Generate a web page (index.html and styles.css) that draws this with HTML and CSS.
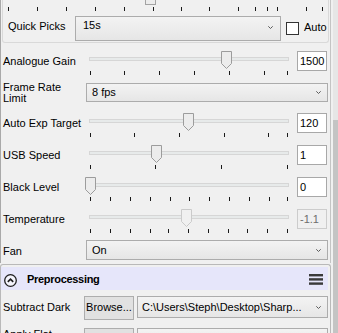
FILE: index.html
```html
<!DOCTYPE html>
<html>
<head>
<meta charset="utf-8">
<link rel="stylesheet" href="styles.css">
</head>
<body>
<div class="screen">
  <div class="main">
    <div class="panel cam">
      <div class="group">
        <div class="topslider">
          <div class="thumb-top"></div>
          <i class="tick" style="left:5px"></i><i class="tick" style="left:34px"></i><i class="tick" style="left:63px"></i><i class="tick" style="left:92px"></i><i class="tick" style="left:121px"></i><i class="tick" style="left:150px"></i><i class="tick" style="left:178px"></i><i class="tick" style="left:206px"></i><i class="tick" style="left:235px"></i><i class="tick" style="left:252px"></i><i class="tick" style="left:264px"></i><i class="tick" style="left:274px"></i><i class="tick" style="left:303px"></i><i class="tick" style="left:319px"></i>
        </div>
        <div class="qp-row">
          <span class="qp-label">Quick Picks</span>
          <div class="combo combo-top qp-combo"><span>15s</span><svg class="chev" width="5" height="3" viewBox="0 0 5 3"><path d="M0.3 0.3L2.5 2.5L4.7 0.3"/></svg></div>
          <span class="check"></span>
          <span class="auto">Auto</span>
        </div>
      </div>

      <div class="row first">
        <span class="lbl">Analogue Gain</span>
        <div class="slider">
          <div class="track"></div>
          <i class="tick" style="left:4px"></i><i class="tick" style="left:38px"></i><i class="tick" style="left:73px"></i><i class="tick" style="left:108px"></i><i class="tick" style="left:143px"></i><i class="tick" style="left:178px"></i><i class="tick" style="left:201px"></i>
          <svg class="thumb" style="left:135px" width="11" height="18" viewBox="0 0 11 18"><path d="M0.5 0.5H10.5V12.5L5.5 17.5L0.5 12.5Z"/></svg>
        </div>
        <span class="val">1500</span>
      </div>

      <div class="row row-frame">
        <span class="lbl lbl-two">Frame Rate<br>Limit</span>
        <div class="combo wide frame-combo"><span>8 fps</span><svg class="chev" width="5" height="3" viewBox="0 0 5 3"><path d="M0.3 0.3L2.5 2.5L4.7 0.3"/></svg></div>
      </div>

      <div class="row">
        <span class="lbl">Auto Exp Target</span>
        <div class="slider">
          <div class="track"></div>
          <i class="tick" style="left:4px"></i><i class="tick" style="left:48px"></i><i class="tick" style="left:93px"></i><i class="tick" style="left:138px"></i><i class="tick" style="left:182px"></i><i class="tick" style="left:201px"></i>
          <svg class="thumb" style="left:97px" width="11" height="18" viewBox="0 0 11 18"><path d="M0.5 0.5H10.5V12.5L5.5 17.5L0.5 12.5Z"/></svg>
        </div>
        <span class="val">120</span>
      </div>

      <div class="row">
        <span class="lbl">USB Speed</span>
        <div class="slider">
          <div class="track"></div>
          <i class="tick" style="left:4px"></i><i class="tick" style="left:69px"></i><i class="tick" style="left:135px"></i><i class="tick" style="left:201px"></i>
          <svg class="thumb" style="left:65px" width="11" height="18" viewBox="0 0 11 18"><path d="M0.5 0.5H10.5V12.5L5.5 17.5L0.5 12.5Z"/></svg>
        </div>
        <span class="val">1</span>
      </div>

      <div class="row">
        <span class="lbl">Black Level</span>
        <div class="slider">
          <div class="track"></div>
          <i class="tick" style="left:4px"></i><i class="tick" style="left:24px"></i><i class="tick" style="left:44px"></i><i class="tick" style="left:64px"></i><i class="tick" style="left:84px"></i><i class="tick" style="left:103px"></i><i class="tick" style="left:123px"></i><i class="tick" style="left:143px"></i><i class="tick" style="left:163px"></i><i class="tick" style="left:183px"></i><i class="tick" style="left:201px"></i>
          <svg class="thumb" style="left:-1px" width="11" height="18" viewBox="0 0 11 18"><path d="M0.5 0.5H10.5V12.5L5.5 17.5L0.5 12.5Z"/></svg>
        </div>
        <span class="val">0</span>
      </div>

      <div class="row row-temp">
        <span class="lbl">Temperature</span>
        <div class="slider">
          <div class="track"></div>
          <i class="tick" style="left:4px"></i><i class="tick" style="left:24px"></i><i class="tick" style="left:44px"></i><i class="tick" style="left:64px"></i><i class="tick" style="left:82px"></i><i class="tick" style="left:102px"></i><i class="tick" style="left:122px"></i><i class="tick" style="left:142px"></i><i class="tick" style="left:161px"></i><i class="tick" style="left:181px"></i><i class="tick" style="left:201px"></i>
          <svg class="thumb thumb-dis" style="left:95px" width="11" height="18" viewBox="0 0 11 18"><path d="M0.5 0.5H10.5V12.5L5.5 17.5L0.5 12.5Z"/></svg>
        </div>
        <span class="val val-dis">-1.1</span>
      </div>

      <div class="row row-fan">
        <span class="lbl">Fan</span>
        <div class="combo wide fan-combo"><span>On</span><svg class="chev" width="5" height="3" viewBox="0 0 5 3"><path d="M0.3 0.3L2.5 2.5L4.7 0.3"/></svg></div>
      </div>
    </div>

    <div class="panel pre">
      <div class="pre-head">
        <svg class="collapse" width="13" height="13" viewBox="0 0 13 13"><circle cx="6.5" cy="6.5" r="5.8"/><path d="M3.8 7.8L6.5 5.1L9.2 7.8"/></svg>
        <span class="pre-title">Preprocessing</span>
        <svg class="menu" width="14" height="11" viewBox="0 0 14 11"><rect x="0" y="0" width="14" height="2.4"/><rect x="0" y="4.2" width="14" height="2.4"/><rect x="0" y="8.4" width="14" height="2.4"/></svg>
      </div>
      <div class="frow">
        <span class="flbl">Subtract Dark</span>
        <span class="btn">Browse...</span>
        <div class="combo path-combo"><span>C:\Users\Steph\Desktop\Sharp...</span><svg class="chev" width="5" height="3" viewBox="0 0 5 3"><path d="M0.3 0.3L2.5 2.5L4.7 0.3"/></svg></div>
      </div>
      <div class="frow">
        <span class="flbl flbl-top">Apply Flat</span>
        <span class="btn">Browse...</span>
        <div class="combo path-combo"><span>None</span><svg class="chev" width="5" height="3" viewBox="0 0 5 3"><path d="M0.3 0.3L2.5 2.5L4.7 0.3"/></svg></div>
      </div>
    </div>
  </div>
  <div class="scrollbar"><div class="sthumb"></div></div>
</div>
</body>
</html>
```

FILE: styles.css
```css
* { box-sizing: border-box; margin: 0; padding: 0; }
html, body { width: 338px; height: 333px; overflow: hidden; background: #f0f0f0; }
body {
  font-family: "Liberation Sans", Arial, sans-serif;
  font-size: 11px;
  line-height: 13px;
  color: #000;
}
.screen { display: flex; height: 333px; }
.main { width: 331px; display: flex; flex-direction: column; }
.scrollbar { width: 5px; margin-left: 2px; background: #e6e6e6; padding-top: 120px; }
.sthumb { height: 260px; background: #c4c4c4; }

.cam {
  height: 263px;
  border-left: 1px solid #a9a9a9;
  border-right: 1px solid #c4c4c4;
}

.group {
  margin-left: 1px;
  width: 327px;
  height: 43px;
  border: 1px solid #d9d9d9;
  border-top: none;
  border-radius: 0 0 3px 3px;
}
.topslider { position: relative; height: 12px; }
.tick { position: absolute; width: 1px; height: 4px; background: #1a1a1a; }
.topslider .tick { top: 7px; }
.thumb-top {
  position: absolute; left: 142px; top: 0;
  width: 11px; height: 5px;
  border: 1px solid #a3a3a3; border-top: none;
  background: #ececec;
}
.qp-row { display: flex; align-items: flex-start; height: 30px; padding-top: 4px; }
.qp-label { margin-left: 5px; width: 67px; margin-top: 4px; white-space: nowrap; }

.combo {
  display: flex; align-items: center; justify-content: space-between;
  border: 1px solid #acacac;
  background: linear-gradient(#f3f3f3, #e6e6e6);
  white-space: nowrap;
}
.chev { fill: none; stroke: #5a5a5a; stroke-width: 1; flex: none; }
.combo-top { align-items: flex-start; }
.qp-combo { width: 206px; height: 25px; padding: 2px 7px 0 7px; }
.qp-combo .chev { margin-top: 7px; }
.check {
  width: 13px; height: 13px; margin: 6px 0 0 5px;
  border: 1px solid #333; background: #fff;
}
.auto { margin: 5px 0 0 5px; }

.row { display: flex; align-items: flex-start; height: 32px; }
.row.first { margin-top: 8px; }
.row-frame { height: 30px; }
.row-temp { height: 31px; }
.row-fan { height: 23px; }
.lbl { width: 85px; padding-left: 2px; margin-top: 4px; white-space: nowrap; }
.lbl-two { line-height: 11px; margin-top: -1px; }
.row-fan .lbl { margin-top: 5px; }

.slider { position: relative; width: 206px; height: 32px; }
.track {
  position: absolute; left: 3px; top: 6px;
  width: 200px; height: 4px;
  border: 1px solid #d6d6d6; background: #e7eaea;
}
.slider .tick { top: 20px; }
.thumb { position: absolute; top: 0; fill: #ececec; stroke: #9c9c9c; stroke-width: 1; }
.thumb-dis { fill: #f0f0f0; stroke: #cbcbcb; }

.val {
  margin-left: 5px; width: 30px; height: 20px;
  border: 1px solid #a8a8a8; background: #fff;
  padding: 3px 2px;
}
.val-dis { background: #f0f0f0; border-color: #cccccc; color: #6d6d6d; }

.wide { width: 242px; padding: 0 6px 0 5px; }
.frame-combo { height: 19px; }
.fan-combo { height: 20px; }

.pre {
  flex: 1;
  margin-top: 1px;
  border: 1px solid #b9b9b9;
  border-bottom: none;
  border-radius: 3px 3px 0 0;
}
.pre-head {
  display: flex; align-items: center;
  height: 23px; margin: 2px 2px 0 0;
  background: #e6e6fa;
}
.collapse { margin: 3px 0 0 3px; fill: #f4f4fc; stroke: #1e1e1e; stroke-width: 1.3; }
.collapse path { fill: none; stroke-width: 1.7; }
.pre-title { margin: 2px 0 0 10px; font-weight: bold; letter-spacing: -0.3px; }
.menu { margin: 2px 5px 0 auto; fill: #3a3a3a; }

.frow { display: flex; align-items: flex-start; height: 32px; }
.pre-head + .frow { margin-top: 6px; }
.flbl { width: 83px; padding-left: 2px; margin-top: 5px; white-space: nowrap; }
.flbl-top { margin-top: 0; }
.btn {
  width: 50px; height: 24px;
  border: 1px solid #adadad; background: #e1e1e1;
  text-align: center; padding-top: 4px;
}
.path-combo { margin-left: 3px; width: 191px; height: 22px; padding: 0 6px 0 4px; }
```
